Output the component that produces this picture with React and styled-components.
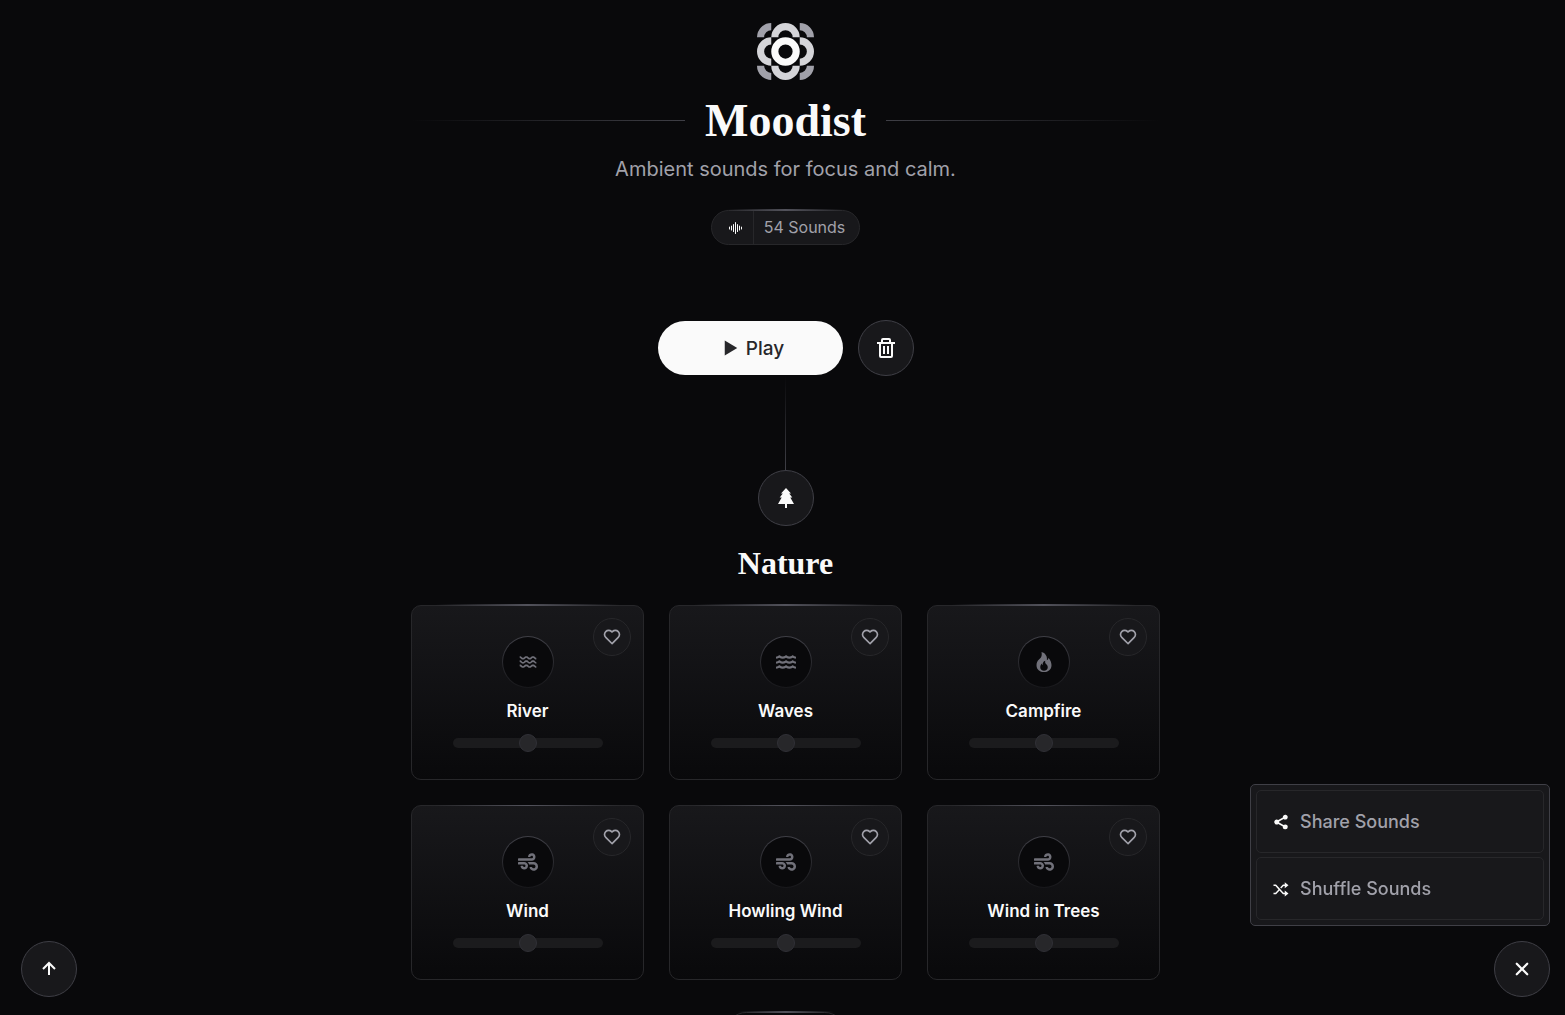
import React from 'react'
import styled, { createGlobalStyle, css } from 'styled-components'
import { BiHeart, BiPlay, BiShuffle, BiTrash, BiUpArrowAlt, BiWater } from 'react-icons/bi'
import { BsFire, BsSoundwave } from 'react-icons/bs'
import { FaWater, FaWind } from 'react-icons/fa'
import { IoClose, IoShareSocialSharp } from 'react-icons/io5'

const sounds = [
  { label: 'River', icon: <BiWater /> },
  { label: 'Waves', icon: <FaWater /> },
  { label: 'Campfire', icon: <BsFire /> },
  { label: 'Wind', icon: <FaWind /> },
  { label: 'Howling Wind', icon: <FaWind /> },
  { label: 'Wind in Trees', icon: <FaWind /> },
]

const Logo = () => (
  <LogoSvg viewBox="0 0 56 56" role="img" aria-label="Moodist logo">
    <circle cx="28" cy="28" r="10.5" stroke="#fafafa" />
    <g stroke="#d4d4d8">
      <path d="M17.5 14a10.5 10.5 0 0 1 21 0" />
      <path d="M17.5 42a10.5 10.5 0 0 0 21 0" />
      <path d="M14 17.5a10.5 10.5 0 0 0 0 21" />
      <path d="M42 17.5a10.5 10.5 0 0 1 0 21" />
    </g>
    <g stroke="#a1a1aa">
      <path d="M3.5 14A10.5 10.5 0 0 1 14 3.5" />
      <path d="M42 3.5A10.5 10.5 0 0 1 52.5 14" />
      <path d="M3.5 42A10.5 10.5 0 0 0 14 52.5" />
      <path d="M42 52.5A10.5 10.5 0 0 0 52.5 42" />
    </g>
  </LogoSvg>
)

const PineTree = () => (
  <svg viewBox="0 0 20 20" width="20" height="20" fill="currentColor" aria-hidden="true">
    <path d="M10 0L5 5.5h1.8L3.7 9.5h2L2 16h7v4h2v-4h7l-3.7-6.5h2L13.2 5.5H15z" />
  </svg>
)

const Sound = ({ label, icon }) => {
  const id = label.toLowerCase().replace(/ /g, '-')

  return (
    <Card>
      <FavoriteButton type="button" aria-label={`Add ${label} to favorites`}>
        <BiHeart />
      </FavoriteButton>
      <SoundIcon>{icon}</SoundIcon>
      <SoundLabel htmlFor={id}>{label}</SoundLabel>
      <Range id={id} type="range" min="0" max="100" defaultValue="50" disabled />
    </Card>
  )
}

const App = () => {
  return (
    <>
      <GlobalStyle />
      <Container>
        <Logo />
        <TitleRow>
          <TitleLine $to="right" />
          <Title>Moodist</Title>
          <TitleLine $to="left" />
        </TitleRow>
        <Description>Ambient sounds for focus and calm.</Description>
        <Count>
          <CountIcon><BsSoundwave /></CountIcon>
          <CountText>54 Sounds</CountText>
        </Count>

        <Buttons>
          <PlayButton type="button"><BiPlay /> Play</PlayButton>
          <RoundButton type="button" aria-label="Delete selection">
            <BiTrash />
          </RoundButton>
        </Buttons>

        <Category>
          <Tail />
          <CategoryIcon><PineTree /></CategoryIcon>
          <CategoryTitle>Nature</CategoryTitle>
          <Grid>
            {sounds.map(sound => <Sound key={sound.label} {...sound} />)}
          </Grid>
          <MoreButton type="button">Show More</MoreButton>
        </Category>
      </Container>

      <ScrollCorner>
        <RoundButton type="button" aria-label="Scroll to top">
          <BiUpArrowAlt />
        </RoundButton>
      </ScrollCorner>

      <MenuCorner>
        <Menu>
          <MenuItem type="button"><IoShareSocialSharp /> Share Sounds</MenuItem>
          <MenuItem type="button"><BiShuffle /> Shuffle Sounds</MenuItem>
        </Menu>
        <RoundButton type="button" aria-label="Close menu">
          <IoClose />
        </RoundButton>
      </MenuCorner>
    </>
  )
}

const GlobalStyle = createGlobalStyle`
  *, *::before, *::after {
    box-sizing: border-box;
  }

  html {
    background: #09090b;
    scrollbar-width: none;
  }

  body {
    margin: 0 0 0 6px;
    color: #fafafa;
    font-family: Inter, sans-serif;
    font-size: 16px;
  }

  h1, h2, p {
    margin: 0;
  }

  button {
    font-family: inherit;
    cursor: pointer;
  }

  svg {
    display: block;
    flex-shrink: 0;
  }
`;

const glow = css`
  &::before {
    content: '';
    position: absolute;
    top: -2px;
    left: 50%;
    width: 80%;
    height: 2px;
    transform: translateX(-50%);
    background: linear-gradient(90deg, transparent, #52525b, transparent);
  }
`;

const circle = css`
  display: flex;
  align-items: center;
  justify-content: center;
  width: 56px;
  height: 56px;
  padding: 0;
  color: #fafafa;
  background: #18181b;
  border: 1px solid #3f3f46;
  border-radius: 50%;
`;

const Container = styled.main`
  display: flex;
  flex-direction: column;
  align-items: center;
  max-width: 749px;
  margin: 0 auto;
  padding: 23px 0 60px;
`;

const LogoSvg = styled.svg`
  width: 57px;
  height: 57px;
  fill: none;
  stroke-width: 7;
`;

const TitleRow = styled.div`
  display: flex;
  align-items: center;
  gap: 20px;
  width: 100%;
  margin-top: 14px;
`;

const TitleLine = styled.span`
  flex: 1;
  height: 1px;
  background: linear-gradient(to ${props => props.$to}, transparent, #3f3f46);
`;

const Title = styled.h1`
  font-family: "Liberation Serif", serif;
  font-size: 46px;
  font-weight: 700;
  line-height: 53px;
`;

const Description = styled.p`
  margin-top: 9px;
  color: #a1a1aa;
  font-size: 20px;
  line-height: 26px;
`;

const Count = styled.div`
  position: relative;
  display: flex;
  height: 35px;
  margin-top: 28px;
  color: #a1a1aa;
  background: #18181b;
  border: 1px solid #27272a;
  border-radius: 18px;

  ${glow}
`;

const CountIcon = styled.span`
  display: flex;
  align-items: center;
  padding: 0 10px 0 15px;
  color: #fafafa;
  border-right: 1px solid #27272a;
`;

const CountText = styled.p`
  padding: 0 14px 0 10px;
  font-size: 16px;
  line-height: 33px;
`;

const Buttons = styled.div`
  display: flex;
  align-items: center;
  gap: 15px;
  margin-top: 75px;
`;

const PlayButton = styled.button`
  display: flex;
  align-items: center;
  justify-content: center;
  width: 185px;
  height: 54px;
  padding: 0;
  color: #27272a;
  background: #fafafa;
  border: 0;
  border-radius: 27px;
  font-size: 19px;
  font-weight: 500;

  svg {
    width: 30px;
    height: 30px;
  }
`;

const RoundButton = styled.button`
  ${circle}
  font-size: 24px;
`;

const Category = styled.section`
  display: flex;
  flex-direction: column;
  align-items: center;
  width: 100%;
`;

const Tail = styled.div`
  width: 1px;
  height: 94px;
  background: linear-gradient(transparent, #3f3f46);
`;

const CategoryIcon = styled.div`
  ${circle}
`;

const CategoryTitle = styled.h2`
  margin-top: 18px;
  font-family: "Liberation Serif", serif;
  font-size: 32px;
  font-weight: 700;
  line-height: 38px;
`;

const Grid = styled.div`
  display: grid;
  grid-template-columns: repeat(3, 1fr);
  gap: 25px;
  width: 100%;
  margin-top: 23px;
`;

const Card = styled.div`
  position: relative;
  display: flex;
  flex-direction: column;
  align-items: center;
  height: 175px;
  padding-top: 30px;
  background: linear-gradient(#18181b, #09090b);
  border: 1px solid #27272a;
  border-radius: 10px;

  ${glow}

  &:nth-child(n + 4)::before {
    top: -1px;
    height: 1px;
  }
`;

const FavoriteButton = styled.button`
  position: absolute;
  top: 12px;
  right: 12px;
  display: flex;
  align-items: center;
  justify-content: center;
  width: 38px;
  height: 38px;
  padding: 0;
  color: #a1a1aa;
  background: #18181b;
  border: 1px solid #27272a;
  border-radius: 50%;
  font-size: 20px;
`;

const SoundIcon = styled.div`
  display: flex;
  align-items: center;
  justify-content: center;
  width: 52px;
  height: 52px;
  color: #71717a;
  background:
    linear-gradient(#09090b, #09090b) padding-box,
    linear-gradient(#3f3f46, #18181b) border-box;
  border: 1px solid transparent;
  border-radius: 50%;
  font-size: 20px;
`;

const SoundLabel = styled.label`
  margin-top: 12px;
  font-size: 17px;
  font-weight: 600;
  line-height: 22px;
`;

const Range = styled.input`
  width: 150px;
  height: 18px;
  margin: 12px 0 0;
  appearance: none;
  background: transparent;

  &::-webkit-slider-runnable-track {
    height: 10px;
    background: #1b1b1d;
    border-radius: 5px;
  }

  &::-webkit-slider-thumb {
    appearance: none;
    width: 18px;
    height: 18px;
    margin-top: -4px;
    background: #27272a;
    border: 1px solid #303036;
    border-radius: 50%;
  }
`;

const MoreButton = styled.button`
  position: relative;
  height: 45px;
  margin-top: 32px;
  padding: 0 20px;
  color: #a1a1aa;
  background: #09090b;
  border: 1px solid #27272a;
  border-radius: 23px;
  font-size: 15px;

  ${glow}
`;

const ScrollCorner = styled.div`
  position: fixed;
  bottom: 18px;
  left: 21px;
`;

const MenuCorner = styled.div`
  position: fixed;
  right: 15px;
  bottom: 18px;
  display: flex;
  flex-direction: column;
  align-items: flex-end;
  gap: 15px;
`;

const Menu = styled.div`
  display: flex;
  flex-direction: column;
  gap: 4px;
  width: 300px;
  padding: 5px;
  background: #18181b;
  border: 1px solid #3f3f46;
  border-radius: 5px;
`;

const MenuItem = styled.button`
  display: flex;
  align-items: center;
  gap: 10px;
  height: 63px;
  padding: 0 15px;
  color: #a1a1aa;
  background: #18181b;
  border: 1px solid #27272a;
  border-radius: 5px;
  font-size: 18px;
  font-weight: 500;

  svg {
    width: 18px;
    height: 18px;
    color: #fafafa;
  }
`;

export default App
